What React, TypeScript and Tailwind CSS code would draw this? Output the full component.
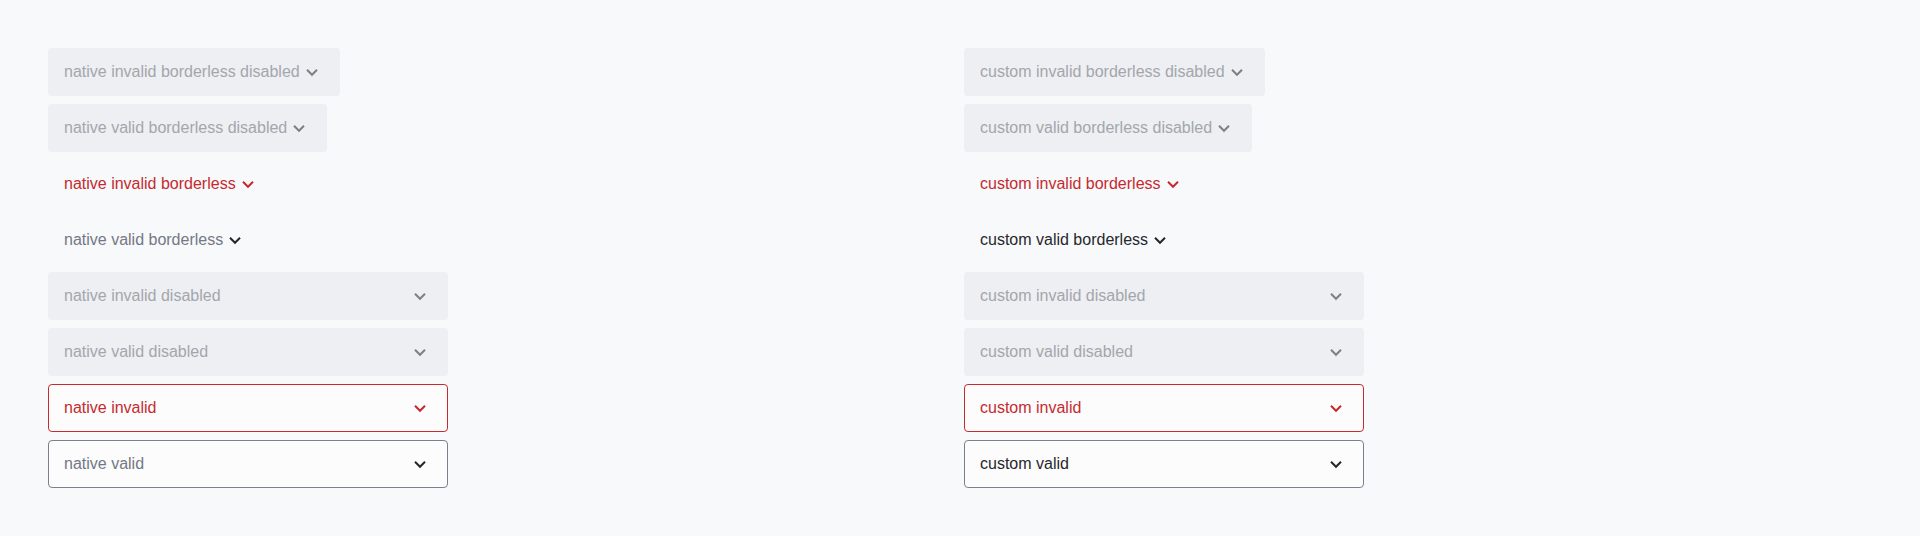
import React from "react";

type Variant = {
  label: string;
  invalid: boolean;
  disabled: boolean;
  borderless: boolean;
  custom: boolean;
};

function Chevron({ className }: { className: string }) {
  return (
    <svg
      viewBox="0 0 16 16"
      width={16}
      height={16}
      fill="none"
      className={className}
      aria-hidden
    >
      <path d="M3 5.8l5 5 5-5" stroke="currentColor" strokeWidth={2} strokeLinecap="butt" strokeLinejoin="miter" />
    </svg>
  );
}

function SelectBox({ v }: { v: Variant }) {
  let box = "h-12 flex items-center rounded gap-1 text-base ";
  let text = "";
  let icon = "";
  if (v.borderless) {
    box += "w-fit ";
  } else {
    box += "w-[400px] justify-between ";
  }
  const bordered = !v.borderless && !v.disabled;
  box += bordered ? "pl-[15px] pr-[19px] " : "pl-4 pr-5 ";
  if (v.disabled) {
    box += "bg-[#eeeff2] ";
    text = "text-[#a3a6ad]";
    icon = "text-[#7b7f88]";
  } else if (v.borderless) {
    box += "bg-transparent ";
    if (v.invalid) {
      text = "text-[#c62a2f]";
      icon = "text-[#c62a2f]";
    } else {
      text = v.custom ? "text-[#26282d]" : "text-[#737885]";
      icon = "text-[#25272c]";
    }
  } else {
    if (v.invalid) {
      box += "bg-[#fcfcfc] border border-[#c62a2f] ";
      text = "text-[#c62a2f]";
      icon = "text-[#c62a2f]";
    } else {
      box += "bg-[#fcfcfc] border border-[#7a808c] ";
      text = v.custom ? "text-[#26282d]" : "text-[#737885]";
      icon = "text-[#25272c]";
    }
  }
  return (
    <div className={box}>
      <span className={text + " whitespace-nowrap"}>{v.label}</span>
      <Chevron className={icon + " shrink-0"} />
    </div>
  );
}

function column(prefix: string, custom: boolean): Variant[] {
  return [
    { label: `${prefix} invalid borderless disabled`, invalid: true, disabled: true, borderless: true, custom },
    { label: `${prefix} valid borderless disabled`, invalid: false, disabled: true, borderless: true, custom },
    { label: `${prefix} invalid borderless`, invalid: true, disabled: false, borderless: true, custom },
    { label: `${prefix} valid borderless`, invalid: false, disabled: false, borderless: true, custom },
    { label: `${prefix} invalid disabled`, invalid: true, disabled: true, borderless: false, custom },
    { label: `${prefix} valid disabled`, invalid: false, disabled: true, borderless: false, custom },
    { label: `${prefix} invalid`, invalid: true, disabled: false, borderless: false, custom },
    { label: `${prefix} valid`, invalid: false, disabled: false, borderless: false, custom },
  ];
}

export default function App() {
  return (
    <div
      className="min-h-screen bg-[#f8f9fb] p-12"
      style={{ fontFamily: '"Liberation Sans", Arial, sans-serif' }}
    >
      <div className="grid grid-cols-2 gap-2">
        {[column("native", false), column("custom", true)].map((col, i) => (
          <div key={i} className="flex flex-col gap-2">
            {col.map((v) => (
              <SelectBox key={v.label} v={v} />
            ))}
          </div>
        ))}
      </div>
    </div>
  );
}
